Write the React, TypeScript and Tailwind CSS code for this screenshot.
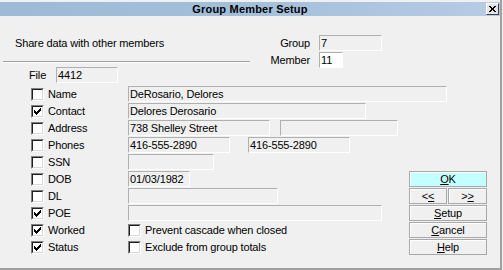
import React from "react";

function Check({ checked }: { checked?: boolean }) {
  return (
    <div className="w-[13px] h-[13px] shrink-0 border border-t-[#808080] border-l-[#808080] border-r-white border-b-white">
      <div className="w-full h-full bg-white border border-t-[#202020] border-l-[#202020] border-r-[#d8d8d8] border-b-[#d8d8d8] flex items-center justify-center">
        {checked && (
          <svg width="7" height="7" viewBox="0 0 7 7" shapeRendering="crispEdges">
            <rect x="6" y="0" width="1" height="1" fill="#000" />
            <rect x="5" y="1" width="2" height="1" fill="#000" />
            <rect x="0" y="2" width="1" height="1" fill="#000" />
            <rect x="4" y="2" width="3" height="1" fill="#000" />
            <rect x="0" y="3" width="2" height="1" fill="#000" />
            <rect x="3" y="3" width="3" height="1" fill="#000" />
            <rect x="0" y="4" width="5" height="1" fill="#000" />
            <rect x="1" y="5" width="3" height="1" fill="#000" />
            <rect x="2" y="6" width="1" height="1" fill="#000" />
          </svg>
        )}
      </div>
    </div>
  );
}

function Field({ cls, text, white }: { cls: string; text?: string; white?: boolean }) {
  return (
    <div
      className={
        "h-[16px] shrink-0 border border-t-[#b0b0b0] border-l-[#b0b0b0] border-r-white border-b-white pl-[1px] flex items-center whitespace-nowrap overflow-hidden " +
        (white ? "bg-white " : "bg-[#f0f0f0] ") +
        cls
      }
    >
      {text}
    </div>
  );
}

type Row = { label: string; checked?: boolean; fields: React.ReactNode };

const rows: Row[] = [
  { label: "Name", fields: <Field cls="w-[319px]" text="DeRosario, Delores" /> },
  { label: "Contact", checked: true, fields: <Field cls="w-[238px]" text="Delores Derosario" /> },
  {
    label: "Address",
    fields: (
      <>
        <Field cls="w-[142px]" text="738 Shelley Street" />
        <Field cls="w-[118px] ml-[10px]" />
      </>
    ),
  },
  {
    label: "Phones",
    fields: (
      <>
        <Field cls="w-[102px]" text="416-555-2890" />
        <Field cls="w-[102px] ml-[18px]" text="416-555-2890" />
      </>
    ),
  },
  { label: "SSN", fields: <Field cls="w-[86px]" /> },
  { label: "DOB", fields: <Field cls="w-[62px]" text="01/03/1982" /> },
  { label: "DL", fields: <Field cls="w-[150px]" /> },
  { label: "POE", checked: true, fields: <Field cls="w-[254px]" /> },
  {
    label: "Worked",
    checked: true,
    fields: (
      <>
        <Check />
        <span className="ml-[4px] whitespace-nowrap">Prevent cascade when closed</span>
      </>
    ),
  },
  {
    label: "Status",
    checked: true,
    fields: (
      <>
        <Check />
        <span className="ml-[4px] whitespace-nowrap">Exclude from group totals</span>
      </>
    ),
  },
];

function Btn({ children, cls }: { children: React.ReactNode; cls?: string }) {
  return (
    <div
      className={
        "h-[16px] border border-[#a8a8a8] shadow-[inset_1px_1px_0_#ffffff] flex items-center justify-center whitespace-nowrap " +
        (cls ?? "bg-[#f0f0f0]")
      }
    >
      {children}
    </div>
  );
}

export default function App() {
  return (
    <div className="w-[503px] h-[270px] bg-[#f0f0f0] font-['Liberation_Sans',Arial,sans-serif] text-[11px] leading-[13px] tracking-[-0.15px] text-black">
      <div className="w-[502px] h-[270px] border-r-2 border-b-2 border-[#a0a0a0]">
        {/* Title bar */}
        <div className="pt-[2px]">
          <div className="h-[14px] bg-linear-to-r from-[#9dbad7] via-[#a3c0da] to-[#b7cbe4] grid grid-cols-[1fr_auto_1fr] items-center">
            <div />
            <div className="font-bold tracking-[0.2px] pt-[1px]">Group Member Setup</div>
            <div className="flex justify-end pr-[1px]">
              <div className="w-[13px] h-[12px] bg-[#e4e4e4] border border-t-white border-l-white border-r-[#404040] border-b-[#404040] flex items-center justify-center">
                <svg width="7" height="6" viewBox="0 0 7 6" shapeRendering="crispEdges">
                  <path d="M0 0h2v1h-2zM5 0h2v1h-2zM1 1h2v1h-2zM4 1h2v1h-2zM2 2h3v2h-3zM1 4h2v1h-2zM4 4h2v1h-2zM0 5h2v1h-2zM5 5h2v1h-2z" fill="#000" />
                </svg>
              </div>
            </div>
          </div>
        </div>

        {/* Top section */}
        <div className="h-[51px] flex">
          <div className="ml-[3px] w-[247px]">
            <div className="pt-[21px] pl-[12px] whitespace-nowrap">Share data with other members</div>
            <div className="mt-[11px] h-[2px] border-t border-[#a0a0a0] border-b border-b-white" />
          </div>
          <div className="ml-[10px] pt-[19px] flex flex-col gap-[1px]">
            <div className="flex items-center h-[16px]">
              <span className="w-[50px] text-right">Group</span>
              <Field cls="w-[63px] ml-[9px]" text="7" />
            </div>
            <div className="flex items-center h-[16px]">
              <span className="w-[50px] text-right">Member</span>
              <Field cls="w-[24px] ml-[9px]" text="11" white />
            </div>
          </div>
        </div>

        {/* Lower section */}
        <div className="flex">
          <div className="w-[409px]">
            <div className="h-[16px] flex items-center mb-[3px]">
              <span className="ml-[29px] w-[27px]">File</span>
              <Field cls="w-[62px]" text="4412" />
            </div>
            {rows.map((r) => (
              <div key={r.label} className="h-[16px] mb-[1px] flex items-center">
                <div className="ml-[31px]">
                  <Check checked={r.checked} />
                </div>
                <span className="ml-[4px] w-[80px] shrink-0">{r.label}</span>
                {r.fields}
              </div>
            ))}
          </div>
          <div className="w-[78px] mt-[104px] flex flex-col gap-[1px]">
            <Btn cls="bg-[#c4ffff]">
              <span>
                <u>O</u>K
              </span>
            </Btn>
            <div className="flex gap-[1px]">
              <Btn cls="bg-[#f0f0f0] w-[38px]">
                <span>
                  &lt;<u>&lt;</u>
                </span>
              </Btn>
              <Btn cls="bg-[#f0f0f0] w-[39px]">
                <span>
                  &gt;<u>&gt;</u>
                </span>
              </Btn>
            </div>
            <Btn>
              <span>
                <u>S</u>etup
              </span>
            </Btn>
            <Btn>
              <span>
                <u>C</u>ancel
              </span>
            </Btn>
            <Btn>
              <span>
                <u>H</u>elp
              </span>
            </Btn>
          </div>
        </div>
      </div>
    </div>
  );
}
